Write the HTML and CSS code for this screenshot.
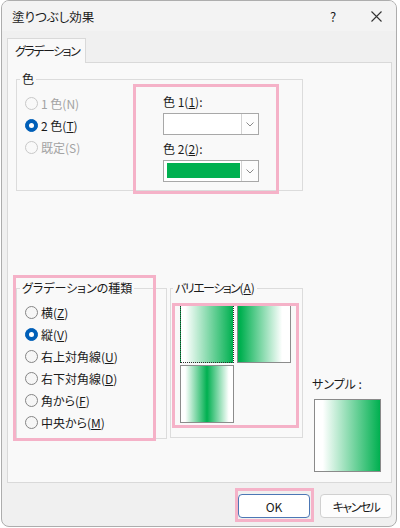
FILE: index.html
```html
<!DOCTYPE html>
<html lang="ja">
<head>
    <meta charset="UTF-8">
    <title>塗りつぶし効果</title>
    <link rel="stylesheet" href="styles.css">
</head>
<body>

<div class="window">
    <div class="titlebar">
        <span class="title">塗りつぶし効果</span>
        <div class="caption">
            <span class="cap-btn help">?</span>
            <span class="cap-btn close">
                <svg width="11" height="11" viewBox="0 0 11 11"><path d="M0.5 0.5 L10.5 10.5 M10.5 0.5 L0.5 10.5" stroke="#333" stroke-width="1.1" fill="none"/></svg>
            </span>
        </div>
    </div>

    <div class="tabs">
        <div class="tab"><span class="narrow">グラデーション</span></div>
    </div>

    <div class="panel">
        <!-- 色 -->
        <fieldset class="group group-color">
            <legend>色</legend>
            <div class="color-body">
                <div class="radio-list list-color">
                    <div class="opt disabled"><span class="radio"></span>1 色(N)</div>
                    <div class="opt"><span class="radio on"></span>2 色(<u>T</u>)</div>
                    <div class="opt disabled"><span class="radio"></span>既定(S)</div>
                </div>
                <div class="pickers">
                    <div class="pick-label">色 1(<u>1</u>):</div>
                    <div class="combo">
                        <span class="swatch"></span>
                        <span class="drop"><svg width="8" height="5" viewBox="0 0 8 5"><path d="M0.5 0.5 L4 4 L7.5 0.5" stroke="#8a8a8a" fill="none"/></svg></span>
                    </div>
                    <div class="pick-label second">色 2(<u>2</u>):</div>
                    <div class="combo">
                        <span class="swatch green"></span>
                        <span class="drop"><svg width="8" height="5" viewBox="0 0 8 5"><path d="M0.5 0.5 L4 4 L7.5 0.5" stroke="#8a8a8a" fill="none"/></svg></span>
                    </div>
                </div>
            </div>
        </fieldset>

        <div class="lower">
            <!-- グラデーションの種類 -->
            <fieldset class="group group-type">
                <legend>グラデーションの種類</legend>
                <div class="radio-list">
                    <div class="opt"><span class="radio"></span>横(<u>Z</u>)</div>
                    <div class="opt"><span class="radio on"></span>縦(<u>V</u>)</div>
                    <div class="opt"><span class="radio"></span>右上対角線(<u>U</u>)</div>
                    <div class="opt"><span class="radio"></span>右下対角線(<u>D</u>)</div>
                    <div class="opt"><span class="radio"></span>角から(<u>F</u>)</div>
                    <div class="opt"><span class="radio"></span>中央から(<u>M</u>)</div>
                </div>
            </fieldset>

            <!-- バリエーション -->
            <fieldset class="group group-var">
                <legend><span class="narrow">バリエーション</span>(<u>A</u>)</legend>
                <div class="tiles">
                    <div class="tile selected g-right"></div>
                    <div class="tile g-left"></div>
                    <div class="tile g-mid"></div>
                </div>
            </fieldset>

            <div class="sample">
                <div class="sample-label">サンプル :</div>
                <div class="sample-box"></div>
            </div>
        </div>
    </div>

    <div class="buttons">
        <div class="btn primary">OK</div>
        <div class="btn"><span class="narrow">キャンセル</span></div>
    </div>
</div>

<!-- 強調枠 -->
<div class="hl hl-color"></div>
<div class="hl hl-type"></div>
<div class="hl hl-var"></div>
<div class="hl hl-ok"></div>

</body>
</html>
```

FILE: styles.css
```css
body {
    margin: 0;
    background-color: #ffffff;
    font-family: "Noto Sans CJK JP", "Noto Sans", sans-serif;
    font-size: 12px;
    font-feature-settings: "palt";
    color: #1b1b1b;
    position: relative;
}
.narrow {
    letter-spacing: -1.5px;
}
.window {
    margin-left: 1px;
    width: 396px;
    height: 527px;
    box-sizing: border-box;
    border: 1px solid #adadad;
    border-radius: 8px;
    background-color: #f0f0f0;
    overflow: hidden;
}

/* タイトルバー */
.titlebar {
    display: flex;
    justify-content: space-between;
    align-items: center;
    height: 30px;
    background-color: #f3f3f3;
}
.title {
    padding-left: 10px;
    font-size: 12.5px;
}
.caption {
    display: flex;
}
.cap-btn {
    display: flex;
    align-items: center;
    justify-content: center;
    height: 30px;
}
.help {
    width: 46px;
    font-size: 13px;
}
.close {
    width: 40px;
}

/* タブ */
.tabs {
    height: 31px;
    display: flex;
    align-items: flex-end;
    padding-left: 5px;
}
.tab {
    width: 79px;
    height: 25px;
    box-sizing: border-box;
    border: 1px solid #d9d9d9;
    border-bottom: none;
    background-color: #f9f9f9;
    padding-left: 7px;
    line-height: 23px;
    white-space: nowrap;
    margin-bottom: -1px;
    position: relative;
    z-index: 1;
}
.panel {
    margin-left: 5px;
    width: 385px;
    height: 421px;
    box-sizing: border-box;
    border: 1px solid #d9d9d9;
    background-color: #f9f9f9;
    padding: 8px 0 0 8px;
}

/* グループ枠 */
.group {
    margin: 0;
    padding: 0;
    border: 1px solid #dcdcdc;
    min-width: 0;
    box-sizing: border-box;
}
.group legend {
    padding: 0 2px;
    margin-left: 3px;
    line-height: 16px;
    white-space: nowrap;
}
.group-color {
    width: 287px;
    height: 120px;
}
.color-body {
    display: flex;
}
.radio-list {
    padding-left: 8px;
    padding-top: 5px;
}
.list-color {
    width: 146px;
    box-sizing: border-box;
}
.opt {
    display: flex;
    align-items: center;
    height: 22px;
    white-space: nowrap;
}
.radio {
    width: 13px;
    height: 13px;
    border-radius: 50%;
    box-sizing: border-box;
    border: 1px solid #858585;
    background-color: #f6f6f6;
    margin-right: 3px;
    display: flex;
    align-items: center;
    justify-content: center;
}
.radio.on {
    background-color: #005fb8;
    border-color: #005fb8;
}
.radio.on::after {
    content: "";
    width: 5px;
    height: 5px;
    border-radius: 50%;
    background-color: #ffffff;
}
.opt.disabled {
    color: #a3a3a3;
}
.opt.disabled .radio {
    border-color: #c8c8c8;
    background-color: #f9f9f9;
}

/* 色の選択 */
.pickers {
    padding-top: 6px;
}
.pick-label {
    line-height: 18px;
}
.pick-label.second {
    margin-top: 5px;
}
.combo {
    margin-top: 2px;
    width: 96px;
    height: 22px;
    box-sizing: border-box;
    border: 1px solid #a8a8a8;
    background-color: #ffffff;
    display: flex;
}
.swatch {
    margin: 2px 0 0 3px;
    width: 73px;
    height: 15px;
}
.swatch.green {
    background-color: #00b050;
}
.drop {
    margin-left: auto;
    width: 16px;
    border-left: 1px solid #d2d2d2;
    background-color: #fdfdfd;
    display: flex;
    align-items: center;
    justify-content: center;
}

/* 下段 */
.lower {
    display: flex;
    margin-top: 89px;
}
.group-type {
    width: 151px;
    height: 159px;
}
.group-var {
    margin-left: 3px;
    width: 133px;
    height: 158px;
}
.group-var legend {
    margin-left: 2px;
}
.tiles {
    display: grid;
    grid-template-columns: 54px 54px;
    grid-auto-rows: 58px;
    gap: 2px 3px;
    margin: 9px 0 0 9px;
}
.tile {
    box-sizing: border-box;
    border: 1px solid #8c8c8c;
}
.tile.selected {
    border: 1px dotted #2b2b2b;
}
.g-right {
    background: linear-gradient(to right, #ffffff 8%, #00b050 100%);
}
.g-left {
    background: linear-gradient(to right, #00b050 5%, #ffffff 85%);
}
.g-mid {
    background: linear-gradient(to right, #ffffff 8%, #00b050 50%, #ffffff 92%);
}
.sample {
    margin-left: 9px;
    padding-top: 96px;
}
.sample-label {
    line-height: 16px;
    white-space: nowrap;
}
.sample-box {
    margin-top: 7px;
    margin-left: 2px;
    width: 67px;
    height: 73px;
    box-sizing: border-box;
    border: 1px solid #8a8a8a;
    background: linear-gradient(to right, #ffffff 12%, #00b050 100%);
}

/* ボタン */
.buttons {
    display: flex;
    justify-content: flex-end;
    gap: 10px;
    margin-top: 11px;
    padding-right: 4px;
}
.btn {
    width: 72px;
    height: 24px;
    box-sizing: border-box;
    border: 1px solid #d0d0d0;
    border-radius: 4px;
    background-color: #fdfdfd;
    display: flex;
    align-items: center;
    justify-content: center;
}
.btn.primary {
    border-color: #4c77b5;
    background-color: #ffffff;
}

/* 強調枠 */
.hl {
    position: absolute;
    border: 3px solid #f5b2c8;
    box-sizing: border-box;
}
.hl-color {
    left: 133px;
    top: 84px;
    width: 146px;
    height: 110px;
}
.hl-type {
    left: 13px;
    top: 275px;
    width: 143px;
    height: 166px;
}
.hl-var {
    left: 172px;
    top: 303px;
    width: 127px;
    height: 125px;
}
.hl-ok {
    left: 235px;
    top: 488px;
    width: 79px;
    height: 34px;
}
```
